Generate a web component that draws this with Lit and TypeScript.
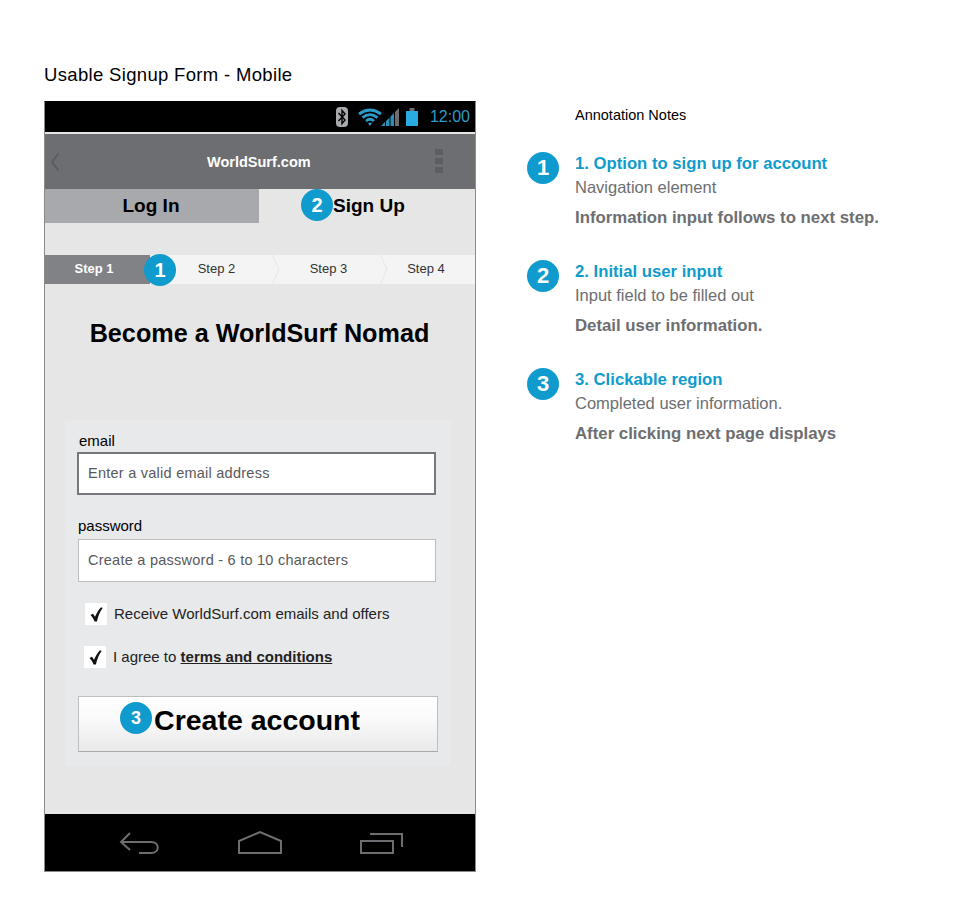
import { LitElement, html, css, svg } from "lit";
import { customElement } from "lit/decorators.js";

const notes = [
  { n: 1, title: "1. Option to sign up for account", sub: "Navigation element", detail: "Information input follows to next step." },
  { n: 2, title: "2. Initial user input", sub: "Input field to be filled out", detail: "Detail user information." },
  { n: 3, title: "3. Clickable region", sub: "Completed user information.", detail: "After clicking next page displays" },
];

const check = svg`<svg class="tick" width="13" height="15" viewBox="0 0 13 15"><path d="M0.5 8 L3 6.8 L5 9.8 C6.5 6.2 8.5 3 11 0.3 L12.7 1 C10 4.4 8 9.2 6.9 14.6 L4.5 14.6 C3.8 12 2.2 9.8 0.5 8Z" fill="#111"/></svg>`;

@customElement("app-root")
export class AppRoot extends LitElement {
  static styles = css`
    :host {
      display: block;
      width: 960px;
      height: 900px;
      box-sizing: border-box;
      padding: 64px 0 0 44px;
      background: #fff;
      font-family: "Liberation Sans", Arial, sans-serif;
      color: #000;
    }
    .page-title {
      font-size: 18.5px;
      line-height: 21px;
      letter-spacing: 0.33px;
      margin-bottom: 16px;
    }
    .main {
      display: flex;
    }
    .phone {
      width: 432px;
      height: 771px;
      box-sizing: border-box;
      border: 1px solid #8a8b8d;
      border-top-color: #000;
      background: #e6e6e7;
      display: flex;
      flex-direction: column;
    }
    .status {
      height: 30px;
      background: #000;
      display: flex;
      align-items: center;
      justify-content: flex-end;
      padding-right: 5px;
      color: #2d9cc9;
      font-size: 16px;
      flex: none;
    }
    .status svg {
      display: block;
    }
    .status .bt {
      margin-right: 10px;
    }
    .status .wifi {
      margin-right: -1px;
    }
    .status .battery {
      margin: 0 12px 0 6px;
    }
    .appbar {
      height: 55px;
      margin-top: 2px;
      background: #6d6e71;
      flex: none;
      display: grid;
      grid-template-columns: 157px auto 1fr;
      align-items: center;
      padding: 0 32px 0 5px;
      color: #fff;
      font-size: 14.5px;
      font-weight: 700;
    }
    .appbar .menu {
      justify-self: end;
    }
    .tabs {
      display: flex;
      height: 34px;
      flex: none;
      font-size: 19px;
      font-weight: 700;
    }
    .tab {
      display: flex;
      align-items: center;
      position: relative;
    }
    .tab.login {
      background: #a7a9ac;
      width: 214px;
      justify-content: center;
      padding-right: 2px;
      box-sizing: border-box;
    }
    .tab.signup {
      flex: 1;
      padding-left: 74px;
    }
    .tab.signup .badge {
      left: 42px;
      top: 0;
    }
    .steps-wrap {
      position: relative;
      flex: none;
      margin-top: 32px;
    }
    .steps {
      height: 29px;
      background: #f4f4f5;
      display: flex;
      font-size: 13px;
      color: #333;
      overflow: hidden;
    }
    .step {
      display: flex;
      align-items: center;
      justify-content: center;
      position: relative;
      box-sizing: border-box;
      padding-bottom: 2px;
    }
    .step.s1 {
      width: 105px;
      padding-right: 7px;
      background: #808285;
      color: #fff;
      font-weight: 700;
    }
    .step.s2 {
      width: 135px;
      padding-right: 2px;
    }
    .step.s3 {
      width: 108px;
      padding-right: 21px;
    }
    .step.s4 {
      flex: 1;
      padding-right: 16px;
    }
    .step.s2::after,
    .step.s3::after {
      content: "";
      position: absolute;
      right: 2px;
      top: 4px;
      width: 20px;
      height: 20px;
      border-top: 1px solid #dcddde;
      border-right: 1px solid #dcddde;
      transform: scaleX(0.45) rotate(45deg);
    }
    .steps-wrap .badge {
      left: 99px;
      top: -1px;
    }
    h1 {
      margin: 35px 0 0;
      text-align: center;
      font-size: 25.2px;
      line-height: 28px;
      font-weight: 700;
      padding-right: 1px;
    }
    .form {
      margin: 73px 24px 0 20px;
      height: 346px;
      background: #e8e9eb;
      box-sizing: border-box;
      padding: 13px 15px 0 13px;
      flex: none;
    }
    .field-label {
      display: block;
      font-size: 15px;
      line-height: 16px;
      margin-bottom: 3px;
      padding-left: 1px;
    }
    .field-label.second {
      margin-bottom: 5px;
      padding-left: 0;
    }
    .input {
      height: 43px;
      box-sizing: border-box;
      background: #fff;
      border: 2px solid #77787b;
      display: flex;
      align-items: center;
      padding: 0 8px 1px 9px;
      font-size: 14.5px;
      color: #58595b;
      letter-spacing: 0.25px;
      margin: 0 0 23px -1px;
    }
    .input.idle {
      border: 1px solid #bcbec0;
      padding: 0 9px 2px;
      margin: 0 0 21px;
    }
    .checks {
      display: flex;
      flex-direction: column;
      gap: 21px;
    }
    .check-row {
      display: flex;
      align-items: center;
      gap: 7px;
      font-size: 15px;
      line-height: 22px;
      color: #222;
      padding-left: 7px;
    }
    .check-row + .check-row {
      padding-left: 6px;
    }
    .box {
      width: 22px;
      height: 22px;
      background: #fff;
      display: flex;
      align-items: center;
      justify-content: center;
      flex: none;
    }
    .terms {
      font-weight: 700;
      text-decoration: underline;
    }
    .create {
      margin-top: 28px;
      height: 56px;
      width: 360px;
      box-sizing: border-box;
      border: 1px solid #bcbec0;
      border-bottom-color: #a7a9ac;
      background: linear-gradient(#ffffff, #fafafa 40%, #e9e9ea);
      font-size: 28.5px;
      font-weight: 700;
      display: flex;
      align-items: center;
      justify-content: center;
      position: relative;
      padding: 0 2px 8px 0;
    }
    .create .badge {
      left: 41px;
      top: 5px;
      font-size: 18px;
    }
    .spacer {
      flex: 1;
    }
    .navbar {
      height: 57px;
      flex: none;
      background: #000;
      display: flex;
      align-items: center;
      justify-content: center;
    }
    .badge {
      position: absolute;
      width: 32px;
      height: 32px;
      border-radius: 50%;
      background: #0f9bcd;
      color: #fff;
      font-size: 20px;
      font-weight: 700;
      display: flex;
      align-items: center;
      justify-content: center;
      z-index: 1;
    }
    .notes {
      margin-left: 51px;
      padding-top: 6px;
      width: 370px;
    }
    .notes-title {
      font-size: 14.5px;
      line-height: 16px;
      margin: 0 0 29px 48px;
    }
    .note {
      display: flex;
      gap: 16px;
      height: 108px;
    }
    .note .badge {
      position: static;
      flex: none;
      font-size: 22px;
    }
    .note-body {
      padding-top: 2px;
      white-space: nowrap;
    }
    .note-title {
      color: #0f9bcd;
      font-size: 16.7px;
      line-height: 20px;
      font-weight: 700;
    }
    .note-sub {
      color: #6d6e71;
      font-size: 16.5px;
      line-height: 20px;
      margin-top: 3px;
    }
    .note-detail {
      color: #6d6e71;
      font-size: 16.8px;
      line-height: 20px;
      font-weight: 700;
      margin-top: 11px;
    }
  `;

  render() {
    return html`
      <div class="page-title">Usable Signup Form - Mobile</div>
      <div class="main">
        <div class="phone">
          <div class="status">
            <svg class="bt" width="12" height="20" viewBox="0 0 12 20">
              <rect width="12" height="20" rx="4" fill="#a7a9ac" />
              <path d="M2.5 6 L9 13 L6 16.5 V3.5 L9 7 L2.5 14" fill="none" stroke="#000" stroke-width="1.4" />
            </svg>
            <svg class="wifi" width="24" height="19" viewBox="0 0 24 19">
              <path d="M1 6 Q12 -2 23 6 M4.5 9.6 Q12 3.6 19.5 9.6 M8 13 Q12 9.6 16 13" fill="none" stroke="#2d9cc9" stroke-width="2.8" />
              <path d="M10 15 Q12 14 14 15 L12 18Z" fill="#2d9cc9" />
            </svg>
            <svg width="19" height="19" viewBox="0 0 19 19">
              <path d="M0 18 L4 14 V18Z M5 13 L8.5 9.5 V18 H5Z M9.5 8.5 L13 5 V18 H9.5Z" fill="#2d8fb5" />
              <path d="M14 4 L18 0 V18 H14Z" fill="#6d6e71" />
            </svg>
            <svg class="battery" width="12" height="18" viewBox="0 0 12 18">
              <rect x="3.5" width="5" height="3" fill="#6d6e71" />
              <rect y="3" width="12" height="15" fill="#29abe2" />
            </svg>
            <span>12:00</span>
          </div>
          <div class="appbar">
            <svg width="10" height="20" viewBox="0 0 10 20">
              <path d="M8.5 1.5 L2 10 L8.5 18.5" fill="none" stroke="#58595b" stroke-width="1.4" />
            </svg>
            <span>WorldSurf.com</span>
            <svg class="menu" width="8" height="25" viewBox="0 0 8 25">
              <path d="M0 0h8v6H0z M0 9h8v6H0z M0 18h8v6H0z" fill="#5d5e61" />
            </svg>
          </div>
          <div class="tabs">
            <div class="tab login">Log In</div>
            <div class="tab signup"><span class="badge">2</span>Sign Up</div>
          </div>
          <div class="steps-wrap">
            <div class="steps">
              <div class="step s1">Step 1</div>
              <div class="step s2">Step 2</div>
              <div class="step s3">Step 3</div>
              <div class="step s4">Step 4</div>
            </div>
            <span class="badge">1</span>
          </div>
          <h1>Become a WorldSurf Nomad</h1>
          <div class="form">
            <label class="field-label">email</label>
            <div class="input">Enter a valid email address</div>
            <label class="field-label second">password</label>
            <div class="input idle">Create a password - 6 to 10 characters</div>
            <div class="checks">
              <div class="check-row"><span class="box">${check}</span>Receive WorldSurf.com emails and offers</div>
              <div class="check-row"><span class="box">${check}</span><span>I agree to <span class="terms">terms and conditions</span></span></div>
            </div>
            <div class="create"><span class="badge">3</span>Create account</div>
          </div>
          <div class="spacer"></div>
          <div class="navbar">
            <svg width="290" height="26" viewBox="0 0 290 26">
              <g fill="none" stroke="#6d6e71" stroke-width="2">
                <path d="M15 3 L6 12 L15 20 M6 12 H36 C45 12 45 23 36 23 H24" />
                <path d="M124 23 V11 L145 2 L166 11 V23Z" />
                <path d="M246 11 H278 V23 H246Z M255 4 H287 V17" />
              </g>
            </svg>
          </div>
        </div>
        <div class="notes">
          <div class="notes-title">Annotation Notes</div>
          ${notes.map(
            (n) => html`
              <div class="note">
                <span class="badge">${n.n}</span>
                <div class="note-body">
                  <div class="note-title">${n.title}</div>
                  <div class="note-sub">${n.sub}</div>
                  <div class="note-detail">${n.detail}</div>
                </div>
              </div>
            `
          )}
        </div>
      </div>
    `;
  }
}
